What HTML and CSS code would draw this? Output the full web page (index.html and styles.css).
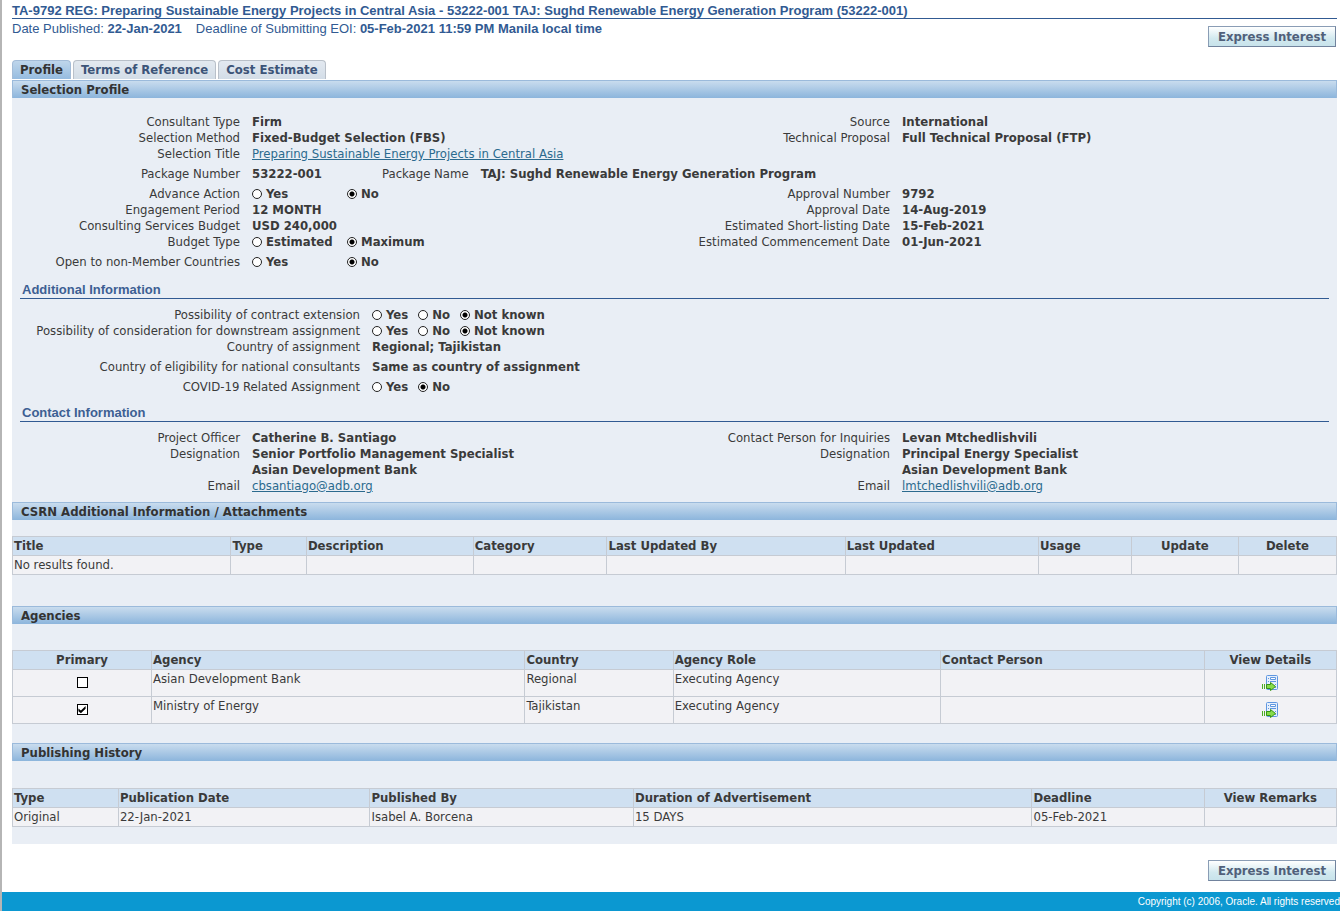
FILE: index.html
```html
<!DOCTYPE html>
<html lang="en">
<head>
<meta charset="utf-8">
<title>Selection Profile</title>
<link rel="stylesheet" href="styles.css">
</head>
<body>
<svg class="sprite" aria-hidden="true">
  <symbol id="details" viewBox="0 0 16 16">
    <rect x="4.500" y=".5" width="11" height="14" rx="1" fill="#e6effc" stroke="#5f97e0"/>
    <path d="M6 3.500h1M6 6.500h1M13 9.500h1M13 12.500h1" stroke="#5f97e0"/>
    <path d="M8.500 2.500h5v2h-5z" fill="#fff" stroke="#5f97e0"/>
    <path d="M8 6.500h6" stroke="#5f97e0"/>
    <path d="M.5 9v5M2.500 9v5" stroke="#4cae24"/>
    <path d="M4.500 9.500h4v-2l5 4-5 4v-2h-4z" fill="#86dc4a" stroke="#379414"/>
  </symbol>
</svg>
<div class="page">
  <header class="masthead">
    <h1>TA-9792 REG: Preparing Sustainable Energy Projects in Central Asia - 53222-001 TAJ: Sughd Renewable Energy Generation Program (53222-001)</h1>
    <div class="masthead-row">
      <p class="dates"><span>Date Published: <b>22-Jan-2021</b></span><span>Deadline of Submitting EOI: <b>05-Feb-2021 11:59 PM Manila local time</b></span></p>
      <button class="action" type="button">Express Interest</button>
    </div>
  </header>

  <nav class="tabs">
    <a class="tab tab-current" href="#profile">Profile</a>
    <a class="tab" href="#terms">Terms of Reference</a>
    <a class="tab" href="#cost">Cost Estimate</a>
  </nav>

  <main id="profile">
    <h2 class="bar">Selection Profile</h2>
    <div class="fields fields-four fields-first">
      <span class="label">Consultant Type</span><span class="value">Firm</span>
      <span class="label">Source</span><span class="value">International</span>
      <span class="label">Selection Method</span><span class="value">Fixed-Budget Selection (FBS)</span>
      <span class="label">Technical Proposal</span><span class="value">Full Technical Proposal (FTP)</span>
      <span class="label">Selection Title</span><span class="value wide"><a href="#title">Preparing Sustainable Energy Projects in Central Asia</a></span>
      <span class="label tall">Package Number</span>
      <span class="value wide tall package"><span class="package-number">53222-001</span><span class="label">Package Name</span><span>TAJ: Sughd Renewable Energy Generation Program</span></span>
      <span class="label">Advance Action</span>
      <span class="value pair"><label><input type="radio" name="advance">Yes</label><label><input type="radio" name="advance" checked>No</label></span>
      <span class="label">Approval Number</span><span class="value">9792</span>
      <span class="label">Engagement Period</span><span class="value">12 MONTH</span>
      <span class="label">Approval Date</span><span class="value">14-Aug-2019</span>
      <span class="label">Consulting Services Budget</span><span class="value">USD 240,000</span>
      <span class="label">Estimated Short-listing Date</span><span class="value">15-Feb-2021</span>
      <span class="label">Budget Type</span>
      <span class="value pair"><label><input type="radio" name="budget">Estimated</label><label><input type="radio" name="budget" checked>Maximum</label></span>
      <span class="label">Estimated Commencement Date</span><span class="value">01-Jun-2021</span>
      <span class="label tall">Open to non-Member Countries</span>
      <span class="value pair wide tall"><label><input type="radio" name="open">Yes</label><label><input type="radio" name="open" checked>No</label></span>
    </div>

    <h3 class="subhead">Additional Information</h3>
    <div class="fields fields-two">
      <span class="label">Possibility of contract extension</span>
      <span class="value choices"><label><input type="radio" name="extension">Yes</label><label><input type="radio" name="extension">No</label><label><input type="radio" name="extension" checked>Not known</label></span>
      <span class="label">Possibility of consideration for downstream assignment</span>
      <span class="value choices"><label><input type="radio" name="downstream">Yes</label><label><input type="radio" name="downstream">No</label><label><input type="radio" name="downstream" checked>Not known</label></span>
      <span class="label">Country of assignment</span><span class="value">Regional; Tajikistan</span>
      <span class="label tall">Country of eligibility for national consultants</span><span class="value tall">Same as country of assignment</span>
      <span class="label">COVID-19 Related Assignment</span>
      <span class="value choices"><label><input type="radio" name="covid">Yes</label><label><input type="radio" name="covid" checked>No</label></span>
    </div>

    <h3 class="subhead">Contact Information</h3>
    <div class="fields fields-four fields-contact">
      <span class="label">Project Officer</span><span class="value">Catherine B. Santiago</span>
      <span class="label">Contact Person for Inquiries</span><span class="value">Levan Mtchedlishvili</span>
      <span class="label">Designation</span><span class="value">Senior Portfolio Management Specialist</span>
      <span class="label">Designation</span><span class="value">Principal Energy Specialist</span>
      <span></span><span class="value">Asian Development Bank</span>
      <span></span><span class="value">Asian Development Bank</span>
      <span class="label">Email</span><span class="value"><a href="mailto:cbsantiago@adb.org">cbsantiago@adb.org</a></span>
      <span class="label">Email</span><span class="value"><a href="mailto:lmtchedlishvili@adb.org">lmtchedlishvili@adb.org</a></span>
    </div>

    <h2 class="bar">CSRN Additional Information / Attachments</h2>
    <table class="grid attachments">
      <thead><tr><th class="a1">Title</th><th class="a2">Type</th><th class="a3">Description</th><th class="a4">Category</th><th class="a5">Last Updated By</th><th class="a6">Last Updated</th><th class="a7">Usage</th><th class="a8 center">Update</th><th class="center">Delete</th></tr></thead>
      <tbody><tr><td>No results found.</td><td></td><td></td><td></td><td></td><td></td><td></td><td></td><td></td></tr></tbody>
    </table>

    <h2 class="bar">Agencies</h2>
    <table class="grid agencies">
      <thead><tr><th class="b1 center">Primary</th><th class="b2">Agency</th><th class="b3">Country</th><th class="b4">Agency Role</th><th class="b5">Contact Person</th><th class="center">View Details</th></tr></thead>
      <tbody>
        <tr><td class="center"><input type="checkbox" aria-label="Primary: Asian Development Bank"></td><td>Asian Development Bank</td><td>Regional</td><td>Executing Agency</td><td></td><td class="center"><a class="icon-link" href="#adb" aria-label="View details"><svg class="icon"><use href="#details"/></svg></a></td></tr>
        <tr><td class="center"><input type="checkbox" checked aria-label="Primary: Ministry of Energy"></td><td>Ministry of Energy</td><td>Tajikistan</td><td>Executing Agency</td><td></td><td class="center"><a class="icon-link" href="#energy" aria-label="View details"><svg class="icon"><use href="#details"/></svg></a></td></tr>
      </tbody>
    </table>

    <h2 class="bar">Publishing History</h2>
    <table class="grid history">
      <thead><tr><th class="c1">Type</th><th class="c2">Publication Date</th><th class="c3">Published By</th><th class="c4">Duration of Advertisement</th><th class="c5">Deadline</th><th class="center">View Remarks</th></tr></thead>
      <tbody><tr><td>Original</td><td>22-Jan-2021</td><td>Isabel A. Borcena</td><td>15 DAYS</td><td>05-Feb-2021</td><td></td></tr></tbody>
    </table>
  </main>

  <div class="closing"><button class="action" type="button">Express Interest</button></div>
</div>
<footer class="footer">Copyright (c) 2006, Oracle. All rights reserved</footer>
</body>
</html>
```
FILE: styles.css
```css
* { box-sizing: border-box; }

body {
  margin: 0;
  border-left: 2px solid #b5b5b5;
  background: #fff;
  color: #3a3a3a;
  font: 13px/16px "DejaVu Sans Condensed", "DejaVu Sans", Tahoma, sans-serif;
}

.sprite { display: none; }
.page { padding: 3px 3px 11px 10px; }

h1, h2, h3, p { margin: 0; }

.masthead { color: #315a92; font-family: "Liberation Sans", Arial, sans-serif; }
.masthead h1 {
  font-size: 13px;
  line-height: 15px;
  border-bottom: 1px solid #315a92;
}
.masthead-row {
  display: flex;
  justify-content: space-between;
  align-items: flex-start;
}
.dates { display: flex; gap: 14px; padding-top: 2px; }
.masthead .action { margin-top: 7px; }

.action {
  height: 21px;
  margin-right: 1px;
  padding: 0 9px;
  border: 1px solid #8a9db5;
  border-right-color: #71839d;
  border-bottom-color: #71839d;
  background: linear-gradient(#fff, #d2e9ef 60%, #c8e3eb);
  color: #50607a;
  font: bold 13px/18px "DejaVu Sans Condensed", "DejaVu Sans", Tahoma, sans-serif;
}

.tabs { display: flex; gap: 2px; margin-top: 13px; padding-bottom: 1px; }
.tab {
  height: 19px;
  padding: 0 7px;
  border: 1px solid #b9c0c9;
  border-bottom: 0;
  border-radius: 4px 4px 0 0;
  background: linear-gradient(#e3e9f0, #d3dde7);
  color: #3c5478;
  font-weight: bold;
  line-height: 17px;
  text-decoration: none;
}
.tab-current {
  border-color: #a3bcd8;
  background: linear-gradient(#bfd6eb, #96bce0);
  color: #333;
}

main { padding-bottom: 17px; background: #e9eef5; }

.bar {
  height: 18px;
  padding-left: 8px;
  border: 1px solid #9bbadb;
  border-bottom: 0;
  background: linear-gradient(#c9dcee, #8cb5dc);
  color: #333;
  font-size: 13px;
  line-height: 18px;
}

.fields {
  display: grid;
  column-gap: 12px;
  grid-auto-rows: minmax(16px, auto);
  white-space: nowrap;
}
.fields-four { grid-template-columns: 228fr 426fr 200fr 435fr; }
.fields-two { grid-template-columns: 348fr 965fr; padding: 8px 0 10px; }
.fields-first { padding: 16px 0 8px; }
.fields-contact { padding: 8px 0; }
.fields > * { min-width: 0; }
.label { text-align: right; font-weight: normal; }
.value { font-weight: bold; }
.wide { grid-column: span 3; }
.tall { line-height: 24px; }
.package { display: flex; gap: 12px; }
.package-number { width: 118px; }
.value label { display: inline-flex; align-items: center; gap: 4px; }
.pair { display: flex; }
.pair label { width: 95px; }
.choices { display: flex; gap: 10px; }

a { color: #2b6a8e; font-weight: normal; }

.subhead {
  margin: 0 8px;
  padding-left: 2px;
  border-bottom: 1px solid #315a92;
  color: #3d5f93;
  font: bold 13px/16px "Liberation Sans", Arial, sans-serif;
}

input {
  appearance: none;
  margin: 0;
  background: #fff;
}
input[type="radio"] {
  width: 10px;
  height: 10px;
  border: 1px solid #222;
  border-radius: 50%;
}
input[type="radio"]:checked {
  background: radial-gradient(circle, #000 2px, #fff 3px);
}
input[type="checkbox"] {
  display: inline-block;
  width: 11px;
  height: 11px;
  margin-top: 6px;
  border: 1px solid #000;
  vertical-align: top;
}
input[type="checkbox"]:checked::before {
  content: "";
  display: block;
  height: 100%;
  background: #000;
  clip-path: polygon(10% 40%, 38% 62%, 90% 10%, 90% 42%, 38% 92%, 10% 70%);
}

.grid {
  width: 100%;
  border-collapse: collapse;
  table-layout: fixed;
}
.grid th, .grid td {
  height: 19px;
  padding: 1px;
  border: 1px solid #c6cbd3;
  text-align: left;
  vertical-align: top;
}
.grid th { background: #cfe0f1; }
.grid td { background: #f2f2f5; }
.grid .center { text-align: center; }
.attachments { margin: 16px 0 31px; }
.agencies { margin: 26px 0 19px; }
.agencies td { height: 27px; }
.history { margin-top: 27px; }
.icon-link { display: inline-block; vertical-align: top; }
.icon { display: block; width: 16px; height: 16px; margin-top: 4px; }

.a1 { width: 16.5%; }
.a2 { width: 5.7%; }
.a3 { width: 12.6%; }
.a4 { width: 10.1%; }
.a5 { width: 18%; }
.a6 { width: 14.6%; }
.a7 { width: 7%; }
.a8 { width: 8.1%; }
.b1 { width: 10.5%; }
.b2 { width: 28.2%; }
.b3 { width: 11.2%; }
.b4 { width: 20.2%; }
.b5 { width: 19.9%; }
.c1 { width: 8%; }
.c2 { width: 19%; }
.c3 { width: 19.9%; }
.c4 { width: 30.1%; }
.c5 { width: 13%; }

.closing { display: flex; justify-content: flex-end; padding-top: 16px; }

.footer {
  height: 19px;
  background: #0b98d1;
  color: #fff;
  font: 10px/19px "Liberation Sans", Arial, sans-serif;
  text-align: right;
}
```
